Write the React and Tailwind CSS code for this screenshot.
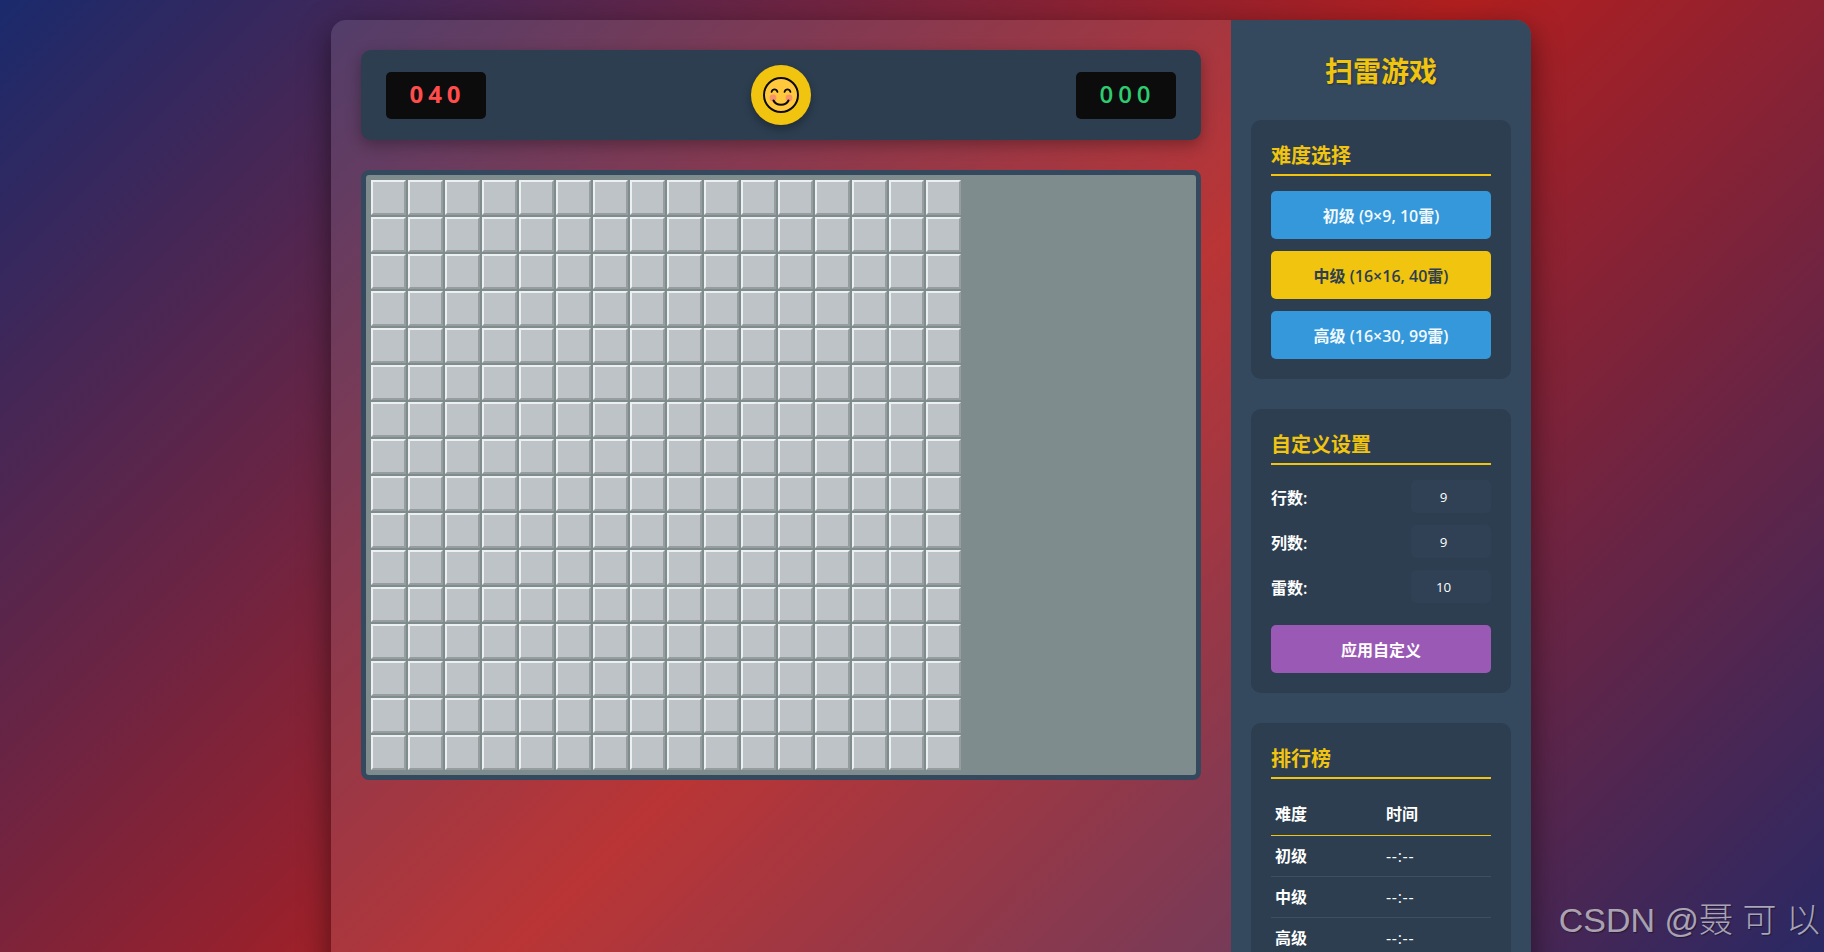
const FONT = "font-['Open_Sans','Noto_Sans_CJK_SC',sans-serif]";

const cells = Array.from({ length: 256 }, (_, i) => i);
const leaderboard = ["初级", "中级", "高级"];
const customFields = [
  { label: "行数:", value: 9 },
  { label: "列数:", value: 9 },
  { label: "雷数:", value: 10 },
];

function Smiley() {
  return (
    <svg width="36" height="36" viewBox="0 0 36 36" fill="none">
      <circle cx="18" cy="18" r="17" fill="#ffc83d" stroke="#0b0b0b" strokeWidth="2" />
      <circle cx="10" cy="21" r="3.4" fill="#f79468" />
      <circle cx="26" cy="21" r="3.4" fill="#f79468" />
      <path d="M8.5 15c1-3.4 5-3.4 6 0" stroke="#0b0b0b" strokeWidth="1.7" strokeLinecap="round" />
      <path d="M21.5 15c1-3.4 5-3.4 6 0" stroke="#0b0b0b" strokeWidth="1.7" strokeLinecap="round" />
      <path d="M10.5 23.5c2.5 5.6 12.5 5.6 15 0" stroke="#0b0b0b" strokeWidth="2" strokeLinecap="round" />
    </svg>
  );
}

function Counter({ value, className }) {
  return (
    <div
      className={`flex h-[47px] w-[100px] items-center justify-center rounded-[5px] bg-[#0c0c0c] pb-[2px] pl-[3px] font-['Open_Sans',sans-serif] text-[24px] tracking-[5px] ${className}`}
    >
      {value}
    </div>
  );
}

function PanelTitle({ children }) {
  return (
    <h3 className="mb-[15px] border-b-2 border-[#f1c40f] pt-[1px] pb-[4px] text-[20px] leading-[29px] font-bold text-[#f1c40f]">
      {children}
    </h3>
  );
}

function LevelButton({ children, active }) {
  return (
    <button
      type="button"
      className={`h-[48px] w-full rounded-[5px] pt-[2px] text-[16px] font-semibold ${
        active ? "bg-[#f1c40f] font-bold text-[#2c3e50]" : "bg-[#3498db] text-[#f2f8fc]"
      }`}
    >
      {children}
    </button>
  );
}

export default function App() {
  return (
    <div className={`relative h-screen overflow-hidden ${FONT}`}>
      <div className="h-[1100px] bg-[linear-gradient(135deg,#1a2a6c,#b21f1f,#1a2a6c)] pt-5 pl-[331px]">
        <div className="flex w-[1200px] overflow-hidden rounded-[15px] bg-white/10 shadow-[0_10px_30px_rgba(0,0,0,0.5)]">
          <main className="w-[900px] p-[30px]">
            <div className="mb-[30px] flex h-[90px] items-center justify-between rounded-[10px] bg-[#2c3e50] px-[25px] shadow-[0_5px_15px_rgba(0,0,0,0.3)]">
              <Counter value="040" className="font-bold text-[#ff4d4d]" />
              <button
                type="button"
                className="flex h-[60px] w-[60px] items-center justify-center rounded-full bg-[#f1c40f] shadow-[0_4px_8px_rgba(0,0,0,0.3)]"
              >
                <Smiley />
              </button>
              <Counter value="000" className="font-semibold text-[#2ecc71]" />
            </div>

            <div className="rounded-[8px] border-[5px] border-[#34495e] bg-[#7f8c8d] p-[5px]">
              <div className="grid w-[590px] grid-cols-[repeat(16,35px)] gap-[2px]">
                {cells.map((i) => (
                  <div
                    key={i}
                    className="h-[35px] w-[35px] border-2 border-t-[#ecf0f1] border-r-[#979c9e] border-b-[#979c9e] border-l-[#ecf0f1] bg-[#bdc3c7]"
                  />
                ))}
              </div>
            </div>
          </main>

          <aside className="w-[300px] bg-[#34495e] px-5 pt-[30px] pb-5 text-white">
            <h1 className="mb-[28px] text-center text-[28px] leading-[42px] font-bold text-[#f1c40f] [text-shadow:1px_1px_2px_rgba(0,0,0,0.3)]">
              扫雷游戏
            </h1>

            <section className="mb-[30px] rounded-[10px] bg-[#2c3e50] p-5">
              <PanelTitle>难度选择</PanelTitle>
              <div className="flex flex-col gap-3">
                <LevelButton>初级 (9×9, 10雷)</LevelButton>
                <LevelButton active>中级 (16×16, 40雷)</LevelButton>
                <LevelButton>高级 (16×30, 99雷)</LevelButton>
              </div>
            </section>

            <section className="mb-[30px] rounded-[10px] bg-[#2c3e50] p-5">
              <PanelTitle>自定义设置</PanelTitle>
              <div className="flex flex-col gap-3">
                {customFields.map((field) => (
                  <label key={field.label} className="flex items-center justify-between text-[16px] font-semibold">
                    <span className="pt-[2px]">{field.label}</span>
                    <input
                      type="number"
                      defaultValue={field.value}
                      className="h-[33px] w-[80px] rounded-[5px] bg-[#304155] text-center text-[13.33px] font-medium text-white outline-none"
                    />
                  </label>
                ))}
              </div>
              <button
                type="button"
                className="mt-[22px] h-[48px] w-full rounded-[5px] bg-[#9b59b6] pt-[2px] text-[16px] font-semibold text-white"
              >
                应用自定义
              </button>
            </section>

            <section className="rounded-[10px] bg-[#2c3e50] p-5">
              <PanelTitle>排行榜</PanelTitle>
              <table className="w-full table-fixed border-collapse text-left text-[16px]">
                <thead>
                  <tr className="h-[41px] border-b border-[#f1c40f]">
                    <th className="px-[4px] font-bold text-white">难度</th>
                    <th className="px-[5px] font-bold text-white">时间</th>
                  </tr>
                </thead>
                <tbody>
                  {leaderboard.map((level) => (
                    <tr key={level} className="h-[41px] border-b border-[#3f4f61]">
                      <td className="px-[4px] font-semibold">{level}</td>
                      <td className="px-[5px] tracking-[0.7px]">--:--</td>
                    </tr>
                  ))}
                </tbody>
              </table>
            </section>
          </aside>
        </div>
      </div>

      <div className="absolute right-[4px] bottom-[15px] font-['Liberation_Sans','Noto_Sans_CJK_SC',sans-serif] text-[34px] leading-none font-light text-white/60 [text-shadow:1px_1px_1px_rgba(0,0,0,0.4)]">
        CSDN @聂 可 以
      </div>
    </div>
  );
}
